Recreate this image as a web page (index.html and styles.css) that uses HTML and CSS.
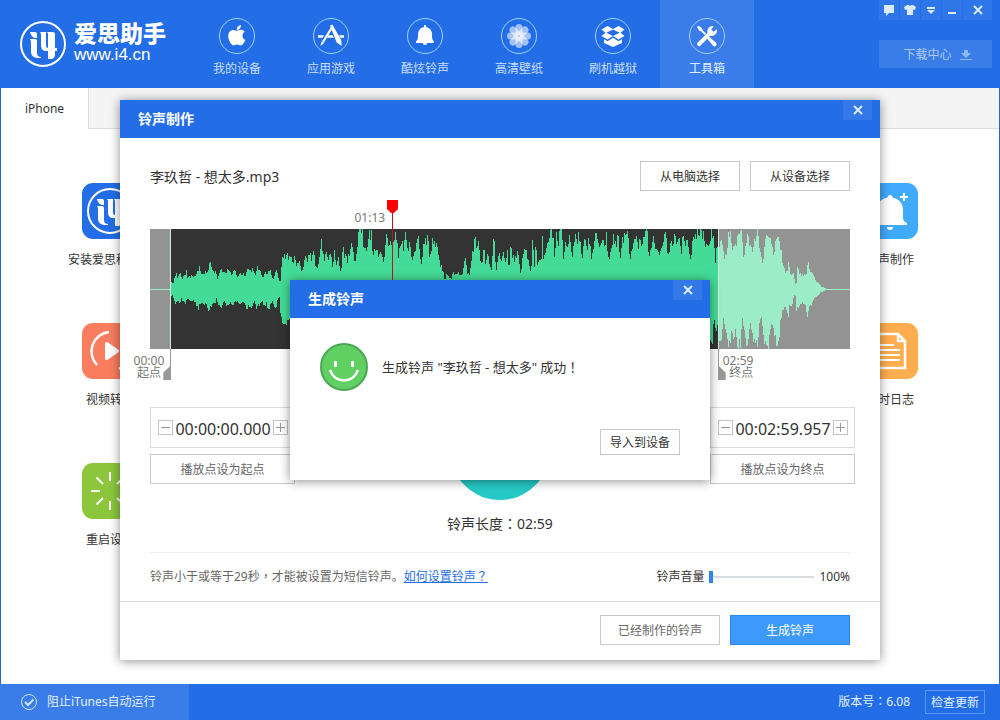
FILE: index.html
```html
<!DOCTYPE html>
<html lang="zh-CN">
<head>
<meta charset="utf-8">
<title>爱思助手</title>
<link rel="stylesheet" href="styles.css">
</head>
<body>
<svg class="defs" aria-hidden="true">
  <symbol id="logo" viewBox="0 0 46 46">
    <circle cx="23" cy="23" r="22" fill="none" stroke="currentColor" stroke-width="2"/>
    <path fill="currentColor" d="M10 11h5q2 0 2 2v4h-2q-4-1-5-6zM10 18h5q2 0 2 2v12q0 4 4 4v1h-4q-6-1-6-6v-9q0-3-1-4zM20 11h6v13q0 3 2 3V13q0-2-2-2h6q3 0 3 2v14h2v3h-2v3q0 4-3 5h-4v-8h-2q-5 0-5-6V14q0-2-1-3z"/>
  </symbol>
  <symbol id="cross" viewBox="0 0 10 10">
    <path d="M1 1l8 8M9 1l-8 8" stroke="currentColor" stroke-width="2" fill="none"/>
  </symbol>
</svg>

<div class="app">
  <header class="topbar">
    <div class="brand">
      <svg class="brand-mark"><use href="#logo"/></svg>
      <div class="brand-text">
        <span class="brand-name">爱思助手</span>
        <span class="brand-url">www.i4.cn</span>
      </div>
    </div>
    <nav class="nav">
      <a class="nav-item" href="#">
        <svg class="nav-icon" viewBox="0 0 36 36"><circle class="ring" cx="18" cy="18" r="17.5"/><path transform="translate(9 5.500) scale(.0455)" d="M318.700 268.700c-.2-36.700 16.400-64.400 50-84.800-18.800-26.900-47.200-41.700-84.700-44.600-35.500-2.800-74.300 20.700-88.500 20.700-15 0-49.400-19.700-76.400-19.700C63.300 141.200 4 184.800 4 273.500q0 39.300 14.400 81.200c12.800 36.700 59 126.700 107.200 125.200 25.200-.6 43-17.900 75.800-17.900 31.800 0 48.300 17.900 76.400 17.900 48.600-.7 90.400-82.500 102.600-119.300-65.200-30.700-61.700-90-61.700-91.900zm-56.600-164.200c27.300-32.400 24.800-61.900 24-72.500-24.100 1.400-52 16.400-67.900 34.900-17.500 19.800-27.800 44.300-25.600 71.900 26.100 2 49.900-11.400 69.500-34.300z"/></svg>
        <span>我的设备</span>
      </a>
      <a class="nav-item" href="#">
        <svg class="nav-icon" viewBox="0 0 36 36"><circle class="ring" cx="18" cy="18" r="17.5"/><path d="M5 17.200h6l-1.500 2.600H5zM15.500 17.200h4l1.500 2.600h-7zM26 17.200h5v2.600h-3.500z"/><path d="M19.500 8.500L10 24" stroke="#fff" stroke-width="2.200"/><path d="M8.700 23.500l2.400 1.500-3.800 3zM17 7.500l2.400-1 8.800 15.500.5 6-5-3.500z"/></svg>
        <span>应用游戏</span>
      </a>
      <a class="nav-item" href="#">
        <svg class="nav-icon" viewBox="0 0 36 36"><circle class="ring" cx="18" cy="18" r="17.500"/><path d="M17 7h2v2c4 .8 6 4 6 7.500 0 4 .3 5.500 2 7V25H9v-1.500c1.700-1.500 2-3 2-7C11 13 13 9.800 17 9zM15.800 25h4.400a2.200 2 0 0 1-4.400 0z"/></svg>
        <span>酷炫铃声</span>
      </a>
      <a class="nav-item" href="#">
        <svg class="nav-icon" viewBox="0 0 36 36"><circle class="ring" cx="18" cy="18" r="17.500"/>
          <g fill-opacity=".58">
            <rect id="petal" x="14.500" y="6" width="7" height="11.500" rx="3.500"/>
            <use href="#petal" transform="rotate(45 18 18)"/><use href="#petal" transform="rotate(90 18 18)"/><use href="#petal" transform="rotate(135 18 18)"/><use href="#petal" transform="rotate(180 18 18)"/><use href="#petal" transform="rotate(225 18 18)"/><use href="#petal" transform="rotate(270 18 18)"/><use href="#petal" transform="rotate(315 18 18)"/>
          </g></svg>
        <span>高清壁纸</span>
      </a>
      <a class="nav-item" href="#">
        <svg class="nav-icon" viewBox="0 0 36 36"><circle class="ring" cx="18" cy="18" r="17.500"/><path d="M12.500 8L18 11l5.500-3 6 3.600-4 3.200 4 3.200-6 3.600-5.500-3.500-5.500 3.500-6-3.600 4-3.200-4-3.200zM18 11.400l-6.700 3.400L18 18l6.700-3.200z" fill-rule="evenodd"/><path d="M9 21.200l3.600 2 5.400-3.400 5.400 3.400 3.600-2v3.700L18 29l-9-4.100z"/></svg>
        <span>刷机越狱</span>
      </a>
      <a class="nav-item nav-item-active" href="#">
        <svg class="nav-icon" viewBox="0 0 36 36"><circle class="ring" cx="18" cy="18" r="17.500"/><path d="M8 9l1.500-1.200 3.200 2.200 1 2.300 3.500 3.500-1.300 1.300-3.500-3.500-2.400-1zM20 18.500l7 6.300a1.900 1.900 0 0 1-3 3l-6-7.300z"/><path d="M24.800 8.200a5.300 5.300 0 0 0-6.300 6.800L8.700 24.500a2 2 0 0 0 3 3L21 17.700a5.300 5.300 0 0 0 6.900-6.400l-3.300 2.500-2.500-2.400z"/></svg>
        <span>工具箱</span>
      </a>
    </nav>
    <div class="top-tools">
      <div class="win-buttons">
        <button class="win-btn" aria-label="反馈"><svg viewBox="0 0 12 12"><path fill="currentColor" d="M1 1h10v8H6l-3 3V9H1z"/></svg></button>
        <button class="win-btn" aria-label="皮肤"><svg viewBox="0 0 12 12"><path fill="currentColor" d="M3 1h1.500q1.500 1.500 3 0H9l3 2-1 3-2-.5V11H3V5.500L1 6 0 3z"/></svg></button>
        <button class="win-btn" aria-label="菜单"><svg viewBox="0 0 12 12"><path fill="currentColor" d="M2 3h8v2H2zM2 6h8l-4 4z"/></svg></button>
        <button class="win-btn" aria-label="最小化"><svg viewBox="0 0 12 12"><path fill="currentColor" d="M2 8h8v2H2z"/></svg></button>
        <button class="win-btn win-close" aria-label="关闭"><svg class="cross"><use href="#cross"/></svg></button>
      </div>
      <button class="download-btn">下载中心<svg viewBox="0 0 12 12"><path fill="currentColor" d="M4 1h4v3h3L6 9 1 4h3zM0 10h12v1H0z"/></svg></button>
    </div>
  </header>

  <div class="tabs"><a class="tab" href="#">iPhone</a></div>

  <main class="tools">
    <a class="tool" href="#"><svg class="tool-icon tool-blue" viewBox="0 0 56 56"><use href="#logo" x="5" y="5" width="46" height="46"/></svg><span>安装爱思移动端</span></a>
    <a class="tool" href="#"><svg class="tool-icon tool-sky" viewBox="0 0 56 56"><path fill="#fff" d="M28 12a2.500 2.500 0 0 1 2.500 2.500C37 16 41 20 41 27v7c0 4 2 5 4 6v2H11v-2c2-1 4-2 4-6v-7c0-7 4-11 10.500-12.500A2.500 2.500 0 0 1 28 12zM25 44h6a3 3 0 0 1-6 0z"/><path d="M42 10v8M38 14h8" stroke="#fff" stroke-width="2"/></svg><span>铃声制作</span></a>
    <a class="tool" href="#"><svg class="tool-icon tool-coral" viewBox="0 0 56 56"><path d="M27 9A19.500 19.500 0 0 0 15 42" fill="none" stroke="#fff" stroke-width="2.500"/><path d="M37 46a19.500 19.500 0 0 0 3-32" fill="none" stroke="#fff" stroke-width="2.500"/><path fill="#fff" d="M23 21q0-3 3-1.500l10 7q2 1.500 0 3l-10 7q-3 1.500-3-1.500z"/></svg><span>视频转换</span></a>
    <a class="tool" href="#"><svg class="tool-icon tool-orange" viewBox="0 0 56 56"><path d="M13 11h23l7 7v27H13z M36 11v7h7" fill="none" stroke="#fff" stroke-width="2.500"/><path d="M18 22h14M18 27h20M18 32h20M18 37h20" stroke="#fff" stroke-width="2"/></svg><span>实时日志</span></a>
    <a class="tool" href="#"><svg class="tool-icon tool-green" viewBox="0 0 56 56"><path d="M28 9v9M28 38v9M9 28h9M38 28h9M14.500 14.500l6.500 6.500M35 35l6.500 6.500M14.500 41.500L21 35M35 21l6.500-6.500" stroke="#fff" stroke-width="2"/></svg><span>重启设备</span></a>
  </main>

  <footer class="statusbar">
    <button class="block-itunes"><svg viewBox="0 0 18 18"><circle cx="9" cy="9" r="7.500"/><path d="M5 9l3 3 5.500-5.500"/></svg>阻止iTunes自动运行</button>
    <div class="version"><span>版本号<span class="punct" lang="zh-TW">：</span>6.08</span><button class="update-btn">检查更新</button></div>
  </footer>
</div>

<div class="overlay">
  <section class="dialog" role="dialog" aria-labelledby="maker-title">
    <div class="dialog-head">
      <h2 id="maker-title">铃声制作</h2>
      <button class="dialog-close" aria-label="关闭"><svg class="cross"><use href="#cross"/></svg></button>
    </div>
    <div class="maker">
      <div class="source">
        <span class="file-name">李玖哲 - 想太多.mp3</span>
        <button class="btn">从电脑选择</button>
        <button class="btn">从设备选择</button>
      </div>

      <div class="wave">
        <svg class="wave-shape" viewBox="0 0 700 120" preserveAspectRatio="none"><path id="wave-path" fill="#44db98"/></svg>
        <div class="shade" style="left: 0; width: 2.900%"></div>
        <div class="shade" style="left: 81.100%; width: 18.900%"></div>
        <div class="handle handle-start" style="left: 2.900%"><span>00:00<br>起点</span></div>
        <div class="handle handle-end" style="left: 81.100%"><span>02:59<br>终点</span></div>
        <div class="playhead" style="left: 34.600%"><span>01:13</span><svg viewBox="0 0 11 13"><path fill="#f00" d="M0 0h11v9l-4 4H4L0 9z"/></svg></div>
      </div>

      <div class="controls">
        <div class="trim">
          <div class="time-box">
            <button class="step" aria-label="起点减少"><svg viewBox="0 0 13 13"><path d="M2 6.500h9"/></svg></button>
            <input type="text" aria-label="起点时间" value="00:00:00.000">
            <button class="step" aria-label="起点增加"><svg viewBox="0 0 13 13"><path d="M2 6.500h9M6.500 2v9"/></svg></button>
          </div>
          <button class="btn btn-soft">播放点设为起点</button>
        </div>
        <button class="play" aria-label="播放"><svg viewBox="0 0 30 30"><path fill="#fff" d="M8 4l18 11L8 26z"/></svg></button>
        <div class="trim">
          <div class="time-box">
            <button class="step" aria-label="终点减少"><svg viewBox="0 0 13 13"><path d="M2 6.500h9"/></svg></button>
            <input type="text" aria-label="终点时间" value="00:02:59.957">
            <button class="step" aria-label="终点增加"><svg viewBox="0 0 13 13"><path d="M2 6.500h9M6.500 2v9"/></svg></button>
          </div>
          <button class="btn btn-soft">播放点设为终点</button>
        </div>
      </div>
      <p class="duration">铃声长度<span class="punct" lang="zh-TW">：</span>02:59</p>

      <div class="options">
        <p class="hint">铃声小于或等于29秒<span class="punct" lang="zh-TW">，</span>才能被设置为短信铃声。<a href="#">如何设置铃声<span class="punct" lang="zh-TW">？</span></a></p>
        <label for="volume">铃声音量</label>
        <input class="volume" id="volume" type="range" min="0" max="100" value="0">
        <span>100%</span>
      </div>
    </div>
    <div class="dialog-foot">
      <button class="btn btn-wide btn-soft">已经制作的铃声</button>
      <button class="btn btn-wide btn-primary">生成铃声</button>
    </div>

    <div class="overlay-inner">
      <section class="dialog message" role="alertdialog" aria-labelledby="done-title">
        <div class="dialog-head">
          <h2 id="done-title">生成铃声</h2>
          <button class="dialog-close" aria-label="关闭"><svg class="cross"><use href="#cross"/></svg></button>
        </div>
        <div class="message-body">
          <svg class="smile" viewBox="0 0 48 48"><circle cx="24" cy="24" r="23" fill="#61d062" stroke="#4ba850" stroke-width="2"/><path fill="#fff" d="M14 18h3v6h-3zM31 18h3v6h-3z"/><path d="M10 27c5 14 23 14 28 0" fill="none" stroke="#fff" stroke-width="2.600"/></svg>
          <p>生成铃声 "李玖哲 - 想太多" 成功<span class="punct" lang="zh-TW">！</span></p>
        </div>
        <div class="message-foot"><button class="btn btn-small">导入到设备</button></div>
      </section>
    </div>
  </section>
</div>
<script src="wave.js"></script>
</body>
</html>
```
FILE: styles.css
```css
* { box-sizing: border-box; }

body {
  margin: 0;
  font: 12px/18px "Noto Sans", "Noto Sans CJK SC", sans-serif;
  color: #333;
}

button, input { font: inherit; color: inherit; margin: 0; padding: 0; }
button { cursor: pointer; border: 0; background: none; }
a { color: inherit; text-decoration: none; }
p, h2 { margin: 0; }
.defs { position: absolute; width: 0; height: 0; }

/* Full-width marks centred in their cell */
.punct { font-family: "Noto Sans CJK TC", sans-serif; line-height: 1; }

.app {
  display: flex;
  flex-direction: column;
  min-height: 100vh;
  background: #fff;
}

.topbar {
  display: flex;
  height: 88px;
  background: #236ee6;
  color: #fff;
}

.brand {
  display: flex;
  align-items: center;
  gap: 8px;
  width: 190px;
  padding-left: 20px;
}
.brand-mark { width: 46px; height: 46px; }
.brand-text { display: flex; flex-direction: column; }
.brand-name { font-size: 23px; line-height: 22px; font-weight: 900; }
.brand-url { font: 17px/22px "Liberation Sans", Arial, sans-serif; }

.nav { display: flex; flex: 1; }
.nav-item {
  display: flex;
  flex-direction: column;
  align-items: center;
  gap: 6px;
  width: 94px;
  padding-top: 18px;
  color: #c9dffb;
}
.nav-item-active { background: #3a7de9; color: #e2eefd; }
.nav-icon { width: 36px; height: 36px; fill: #fff; }
.ring { fill: none; stroke: #9fd0fb; }

.top-tools {
  display: flex;
  flex-direction: column;
  gap: 20px;
  width: 113px;
  margin-right: 8px;
}
.win-buttons { display: flex; gap: 1px; }
.win-btn {
  display: grid;
  place-items: center;
  width: 20px;
  height: 20px;
  background: #2f76e8;
  color: #dbeafd;
}
.win-btn svg { width: 12px; height: 12px; }
.win-close { flex: 1; }
.win-btn .cross, .cross { width: 10px; height: 10px; }
.download-btn {
  display: flex;
  align-items: center;
  justify-content: center;
  gap: 8px;
  height: 28px;
  padding: 2px 0 0 4px;
  background: #3a7de9;
  color: #a9caf7;
}
.download-btn svg { width: 12px; height: 12px; color: #8fb9f4; }

.tabs {
  display: flex;
  height: 41px;
  border: solid #2a64c8;
  border-width: 0 1px;
  background: linear-gradient(#f4f4f4 40px, #dcdcdc 40px);
}
.tab {
  display: grid;
  place-items: center;
  width: 88px;
  background: #fff;
  border-right: 1px solid #dcdcdc;
}

.tools {
  flex: 1;
  display: grid;
  grid-template-columns: 96px 96px;
  justify-content: space-between;
  align-content: start;
  row-gap: 54px;
  padding: 54px 61px 30px;
  border: solid #2a64c8;
  border-width: 0 1px;
}
.tool {
  display: flex;
  flex-direction: column;
  align-items: center;
  gap: 12px;
  white-space: nowrap;
}
.tool-icon { width: 56px; height: 56px; border-radius: 11px; color: #fff; }
.tool-blue { background: #236ee6; }
.tool-sky { background: #40aafd; }
.tool-coral { background: #fa7d5f; }
.tool-orange { background: #ffad4e; }
.tool-green { background: #8cc63c; }

.statusbar {
  display: flex;
  justify-content: space-between;
  height: 36px;
  background: #236ee6;
  color: #fff;
}
.block-itunes {
  display: flex;
  align-items: center;
  gap: 9px;
  width: 189px;
  padding-left: 20px;
  background: #3a7de9;
  color: #e2f0ff;
}
.block-itunes svg {
  width: 18px;
  height: 18px;
  fill: none;
  stroke: #cfe6ff;
}
.block-itunes path { stroke-width: 2; }
.version { display: flex; align-items: center; gap: 15px; padding-right: 15px; color: #e2f0ff; }
.update-btn { width: 60px; height: 24px; padding-top: 1px; border: 1px solid #5c98f2; }

.overlay {
  position: absolute;
  inset: 0;
  display: flex;
  justify-content: center;
  align-items: flex-start;
  padding-top: 100px;
}
.overlay-inner {
  position: absolute;
  inset: 0;
  display: grid;
  place-items: center;
}
.dialog {
  position: relative;
  width: 76%;
  background: #fff;
  box-shadow: 0 1px 10px rgba(0, 0, 0, 0.45);
}
.dialog-head {
  display: flex;
  justify-content: space-between;
  align-items: flex-start;
  height: 38px;
  padding: 0 8px 0 18px;
  background: #236ee6;
  color: #fff;
}
.dialog-head h2 { font-size: 14px; line-height: 38px; }
.dialog-close {
  display: grid;
  place-items: center;
  width: 29px;
  height: 20px;
  background: #3478e8;
  color: #dbeafd;
}

.btn {
  width: 100px;
  height: 30px;
  padding-top: 2px;
  border: 1px solid #c8c8c8;
  background: #fff;
}
.btn-soft { color: #666; }
.btn-wide { width: 120px; }
.btn-small { width: 80px; height: 26px; }
.btn-primary { background: #3e99fd; border-color: #2f86ea; color: #fff; }

.maker { padding: 23px 30px 0; }
.source { display: flex; align-items: center; gap: 10px; }
.file-name { flex: 1; padding-top: 2px; font-size: 14px; }

.wave {
  position: relative;
  height: 120px;
  margin-top: 38px;
  background: #333;
}
.wave-shape { display: block; width: 100%; height: 100%; }
.shade {
  position: absolute;
  top: 0;
  bottom: 0;
  background: rgba(255, 255, 255, 0.47);
}
.handle {
  position: absolute;
  top: 0;
  width: 1px;
  height: 151px;
  background: linear-gradient(#c9f0dc 120px, #999 120px);
  color: #777;
  line-height: 12px;
}
.handle::after {
  content: "";
  position: absolute;
  bottom: 0;
  width: 8px;
  height: 15px;
  background: #999;
}
.handle span { position: absolute; top: 126px; white-space: nowrap; }
.handle-start span { right: 7px; text-align: center; }
.handle-start::after { right: 0; clip-path: polygon(100% 0, 100% 100%, 0 100%, 0 50%); }
.handle-end span { left: 5px; text-align: right; }
.handle-end::after { left: 0; clip-path: polygon(0 0, 100% 50%, 100% 100%, 0 100%); }
.playhead {
  position: absolute;
  top: -20px;
  bottom: 0;
  width: 1px;
  background: #c1121b;
  color: #777;
}
.playhead span { position: absolute; right: 8px; top: 0; }
.playhead svg { position: absolute; left: -5px; top: -9px; width: 11px; height: 13px; }

.controls {
  display: grid;
  grid-template-columns: 140px 1fr 140px;
  justify-items: center;
  margin-top: 51px;
}
.trim {
  display: flex;
  flex-direction: column;
  justify-self: start;
  gap: 6px;
  width: 145px;
  padding-top: 7px;
}
.trim .btn { width: 100%; }
.time-box {
  display: flex;
  align-items: center;
  height: 41px;
  padding: 0 6px 0 7px;
  border: 1px solid #dcdcdc;
}
.time-box input {
  flex: 1;
  min-width: 0;
  padding-top: 2px;
  border: 0;
  background: none;
  font-size: 16px;
  text-align: center;
}
.step { width: 15px; height: 15px; border: 1px solid #c4c4c4; }
.step svg { display: block; width: 13px; height: 13px; stroke: #999; }
.play {
  display: grid;
  place-items: center;
  width: 100px;
  height: 100px;
  border-radius: 50%;
  background: #26c9c5;
}
.play svg { width: 30px; height: 30px; }
.duration { margin-top: 14px; font-size: 14px; line-height: 20px; text-align: center; }

.options {
  display: flex;
  align-items: center;
  gap: 5px;
  height: 49px;
  margin-top: 18px;
  border-top: 1px solid #eee;
}
.hint { flex: 1; color: #666; }
.hint a { color: #236ee6; text-decoration: underline; }
.volume {
  appearance: none;
  width: 105px;
  height: 12px;
  background: linear-gradient(#d9dde0, #d9dde0) center / 100% 2px no-repeat;
}
.volume::-webkit-slider-thumb {
  appearance: none;
  width: 4px;
  height: 12px;
  background: #2f86ea;
}

.dialog-foot {
  display: flex;
  justify-content: flex-end;
  gap: 10px;
  padding: 13px 30px 15px;
  border-top: 1px solid #d8d8d8;
}

.message { width: min(420px, 90%); }
.message-body {
  display: flex;
  align-items: center;
  gap: 14px;
  padding: 25px 30px 0;
  font-size: 13px;
}
.smile { width: 48px; height: 48px; }
.message-foot { display: flex; justify-content: flex-end; padding: 38px 30px 25px; }
```
FILE: wave.js
```js
// Peaks are [position, amplitude] pairs, three units to a pixel.
const intro = [[0,0],[60,0],[62,23],[68,18],[78,48],[82,36],[88,48],[96,33],[108,53],[112,33],[120,40],[130,36],[140,48],[148,68],[154,43],[162,53],[172,48],[178,85],[184,58],[196,48],[202,28],[208,61],[216,58],[224,43],[232,60],[242,43],[250,58],[260,40],[270,48],[285,43],[292,73],[298,53],[306,63],[314,40],[320,66],[330,53],[338,33],[344,53],[352,43],[358,68],[368,28],[378,63],[386,26],[390,23],[392,68],[398,103],[404,93],[410,103],[418,103],[424,83],[432,93],[438,73],[446,83],[452,53],[458,68],[464,108],[470,83],[475,128],[481,93],[489,113],[496,73],[502,63],[508,93],[514,151],[520,93],[528,108],[534,83],[540,118],[546,68],[552,108],[558,73],[564,93],[571,43],[577,123],[585,98],[592,83],[598,118],[606,133],[612,83],[620,118],[624,168],[630,181],[636,181],[640,113],[646,123],[652,118],[657,176],[664,163],[668,98],[675,133],[682,108],[690,118],[698,83],[704,113],[710,176],[714,118],[719,176],[726,108],[732,153],[739,176],[744,108],[752,148],[760,118],[766,180],[772,113],[778,133],[785,83],[792,108],[802,176],[808,113]];
const middle = [[810,98],[814,83],[820,138],[824,153],[828,123],[832,176],[838,98],[842,103],[846,143],[852,136],[860,138],[864,98],[870,73],[878,58],[883,28],[890,50],[898,33],[904,36],[908,63],[912,43],[920,46],[928,48],[934,40],[940,73],[946,93],[952,43],[958,43],[962,88],[968,118],[972,168],[978,123],[984,143],[988,108],[994,73],[1000,128],[1006,70],[1012,123],[1018,63],[1024,58],[1030,168],[1036,63],[1040,63],[1046,123],[1052,68],[1058,128],[1064,73],[1070,123],[1076,63],[1081,145],[1088,93],[1094,98],[1102,108],[1110,48],[1118,98],[1126,133],[1132,93],[1138,68],[1142,38],[1146,138],[1152,78],[1156,141],[1162,70],[1168,98],[1174,98],[1176,171],[1180,78],[1186,128],[1194,148],[1202,180],[1208,168],[1212,88],[1218,168],[1223,138],[1228,178],[1234,180],[1240,83],[1246,158],[1252,113],[1258,168],[1266,93],[1274,163],[1280,133],[1286,168],[1292,108],[1298,108],[1304,158],[1310,128],[1316,158],[1324,93],[1330,133],[1336,158],[1342,173],[1348,113],[1356,138],[1362,138],[1368,158],[1372,118],[1376,98],[1384,128],[1390,168],[1398,123],[1402,178],[1410,88],[1416,153],[1424,168],[1432,173],[1438,93],[1446,118],[1454,168],[1462,123],[1468,143],[1474,128],[1480,173],[1490,180],[1496,93],[1504,148],[1508,173],[1514,113],[1526,108],[1534,118],[1540,168],[1548,173],[1552,93],[1560,148],[1566,143],[1572,168],[1580,148],[1586,158],[1592,108],[1598,163],[1604,138],[1610,148],[1616,123],[1620,93],[1628,158],[1636,173],[1646,168],[1656,170],[1664,148],[1672,133],[1678,158],[1684,176],[1690,158],[1694,83],[1700,128],[1703,113]];
const outro = [[1706,137],[1710,162],[1716,147],[1722,87],[1728,117],[1734,167],[1740,172],[1748,117],[1754,157],[1758,127],[1762,152],[1768,172],[1772,177],[1780,82],[1786,137],[1792,162],[1798,147],[1804,107],[1810,157],[1818,172],[1822,174],[1828,127],[1834,82],[1840,107],[1846,167],[1852,179],[1858,177],[1864,117],[1872,117],[1876,142],[1882,162],[1888,157],[1894,97],[1900,62],[1906,52],[1912,62],[1916,87],[1920,42],[1928,52],[1934,17],[1938,19],[1940,67],[1946,52],[1952,42],[1960,42],[1966,39],[1972,72],[1976,77],[1980,47],[1986,52],[1990,39],[1998,22],[2006,17],[2014,7],[2022,4],[2030,0],[2100,0]];
const peaks = [...intro, ...middle, ...outro];

function amplitude(x) {
  const unit = Math.min(Math.max(x * 3, 0), 2100);
  const i = Math.max(1, peaks.findIndex(p => p[0] >= unit));
  const [x0, a0] = peaks[i - 1];
  const [x1, a1] = peaks[i];
  return (a0 + (a1 - a0) * (unit - x0) / (x1 - x0)) / 3;
}

// Repeatable roughness between 0.85 and 1.1
function rough(n) {
  const s = Math.sin(n * 127.1) * 43758.5;
  return 0.85 + 0.25 * (s - Math.floor(s));
}

let path = '';
for (let x = 0; x < 700; x++) {
  const up = Math.round(amplitude(x) * rough(x));
  const down = Math.round(amplitude(x + 1) * rough(x + 900) * (x < 110 ? 0.85 : 0.98));
  path += `M${x} ${60 - up}h1V${61 + down}h-1z`;
}
document.getElementById('wave-path').setAttribute('d', path);
```
